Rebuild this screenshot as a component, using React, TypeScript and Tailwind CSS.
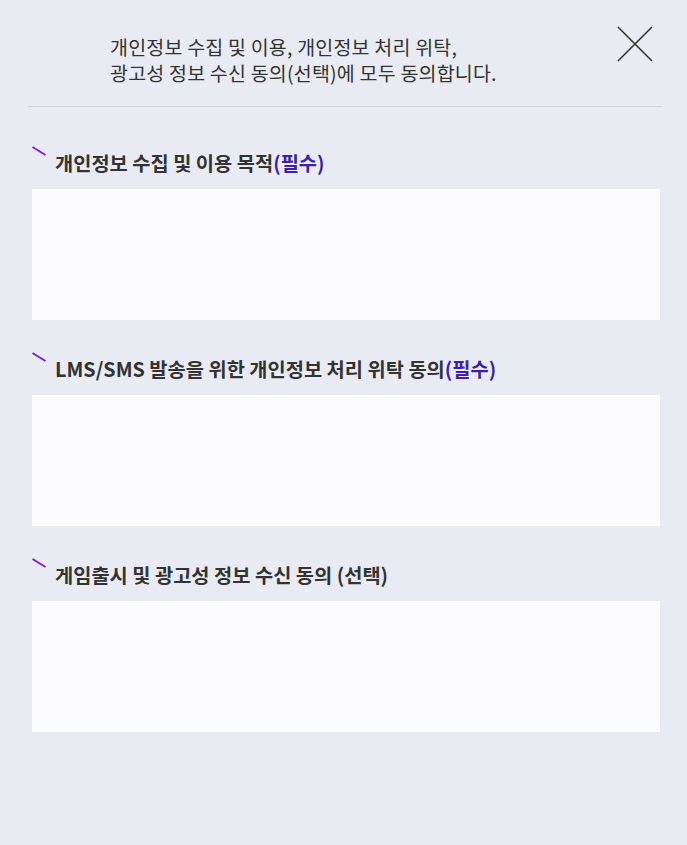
import React from "react";

const sections = [
  { title: "개인정보 수집 및 이용 목적", tag: "(필수)", required: true },
  { title: "LMS/SMS 발송을 위한 개인정보 처리 위탁 동의", tag: "(필수)", required: true },
  { title: "게임출시 및 광고성 정보 수신 동의 ", tag: "(선택)", required: false },
];

function Tick() {
  return (
    <svg width="23" height="12" viewBox="0 0 23 12" className="-mt-[4px] shrink-0">
      <line x1="0.5" y1="1" x2="13.5" y2="9" stroke="#7b1fe0" strokeWidth="2" />
    </svg>
  );
}

function Section({ title, tag, required }: any) {
  return (
    <div className="mt-[36px] first:mt-0">
      <div className="flex items-start">
        <Tick />
        <p className="text-[19.8px] leading-[26px] font-bold text-[#333]">
          {title}
          <span className={required ? "text-[#3d1fa8]" : ""}>{tag}</span>
        </p>
      </div>
      <div className="mt-[13px] h-[131px] bg-[#fcfbfd]"></div>
    </div>
  );
}

export default function App() {
  return (
    <div
      className="min-h-screen w-[687px] h-[845px] bg-[#e8ebf1]"
      style={{ fontFamily: '"Noto Sans CJK KR", "Noto Sans", sans-serif' }}
    >
      <div className="ml-[28px] mr-[25px] border-b border-[#d3d5da] flex justify-between items-start pt-[34px] pb-[20px]">
        <p className="pl-[82px] text-[19.5px] leading-[26px] tracking-[0.2px] text-[#333]">
          개인정보 수집 및 이용, 개인정보 처리 위탁,
          <br />
          광고성 정보 수신 동의(선택)에 모두 동의합니다.
        </p>
        <button className="-mt-[8px] mr-[9px] w-[36px] h-[36px]">
          <svg width="36" height="36" viewBox="0 0 36 36">
            <path d="M1 1L35 35M35 1L1 35" stroke="#333" strokeWidth="1.6" fill="none" />
          </svg>
        </button>
      </div>
      <div className="pl-[32px] pr-[27px] pt-[43px]">
        {sections.map((s) => (
          <Section key={s.title} {...s} />
        ))}
      </div>
    </div>
  );
}
